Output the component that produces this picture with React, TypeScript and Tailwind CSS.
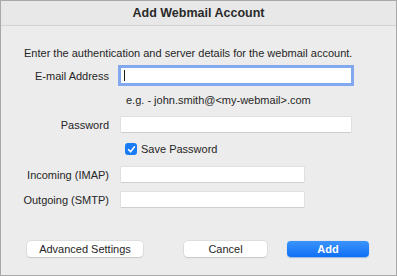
import React, { useState } from 'react';

const font = { fontFamily: '"Liberation Sans", Arial, sans-serif' };

const Field: React.FC<{ label: string; width: string; focused?: boolean; type?: string }> = ({ label, width, focused, type }) => (
  <div className="flex items-center">
    <label className="w-[108px] shrink-0 text-right text-[11px] leading-[14px] text-[#262626]">{label}</label>
    <div className="relative ml-[12px]">
      <input
        type={type || 'text'}
        className={`block h-[15px] ${width} bg-white text-[11px] px-1 outline-none shadow-[0_0_0_0.5px_#d4d4d4,0_1px_0_0_#c8c8c8] ${
          focused ? 'ring-[3px] ring-[#82a9ef]' : ''
        }`}
      />
      {focused && <span className="absolute left-[3px] top-[2px] w-px h-[11px] bg-[#1a1a1a]" />}
    </div>
  </div>
);

export default function App() {
  const [save, setSave] = useState(true);

  return (
    <div className="w-[397px] h-[276px] overflow-hidden bg-[#ececec] border border-[#a9a9a9] flex flex-col text-[#262626]" style={font}>
      <div className="h-[25px] shrink-0 bg-[#e8e8e8] border-b border-[#d3d3d3] flex items-center justify-center">
        <span className="text-[12.5px] font-bold text-[#2a2a2a]">Add Webmail Account</span>
      </div>

      <p className="mt-[20px] pl-[23px] text-[11px] leading-[14px] whitespace-nowrap">
        Enter the authentication and server details for the webmail account.
      </p>

      <div className="mt-[8px] flex flex-col">
        <Field label="E-mail Address" width="w-[230px]" focused />
        <p className="mt-[10px] ml-[125px] text-[11px] leading-[14px]">e.g. - john.smith@&lt;my-webmail&gt;.com</p>
        <div className="mt-[10px]">
          <Field label="Password" width="w-[230px]" type="password" />
        </div>
        <label className="mt-[10px] ml-[124px] flex items-center gap-[4px] text-[11px] leading-[14px]">
          <span
            onClick={() => setSave(!save)}
            className={`w-[12px] h-[12px] rounded-[3px] flex items-center justify-center ${save ? 'bg-[#1a7cf5]' : 'bg-white border border-[#b5b5b5]'}`}
          >
            {save && (
              <svg width="9" height="9" viewBox="0 0 10 10">
                <path d="M1.8 5.2 L4 7.6 L8.3 2" fill="none" stroke="white" strokeWidth="1.7" strokeLinecap="round" strokeLinejoin="round" />
              </svg>
            )}
          </span>
          Save Password
        </label>
        <div className="mt-[11px]">
          <Field label="Incoming (IMAP)" width="w-[183px]" />
        </div>
        <div className="mt-[10px]">
          <Field label="Outgoing (SMTP)" width="w-[183px]" />
        </div>
      </div>

      <div className="mt-[34px] flex items-center text-[11px]">
        <button className="ml-[26px] w-[116px] h-[16px] rounded-[4px] bg-white shadow-[0_0_0_0.5px_#cfcfcf,0_1px_1px_0_#c4c4c4] flex items-center justify-center">
          Advanced Settings
        </button>
        <button className="ml-[41px] w-[83px] h-[16px] rounded-[4px] bg-white shadow-[0_0_0_0.5px_#cfcfcf,0_1px_1px_0_#c4c4c4] flex items-center justify-center">
          Cancel
        </button>
        <button className="ml-[20px] w-[82px] h-[16px] rounded-[4px] bg-gradient-to-b from-[#3a93fb] to-[#0b6ff5] text-white font-bold flex items-center justify-center shadow-[0_0.5px_1px_0_#9bb8e0]">
          Add
        </button>
      </div>
    </div>
  );
}
